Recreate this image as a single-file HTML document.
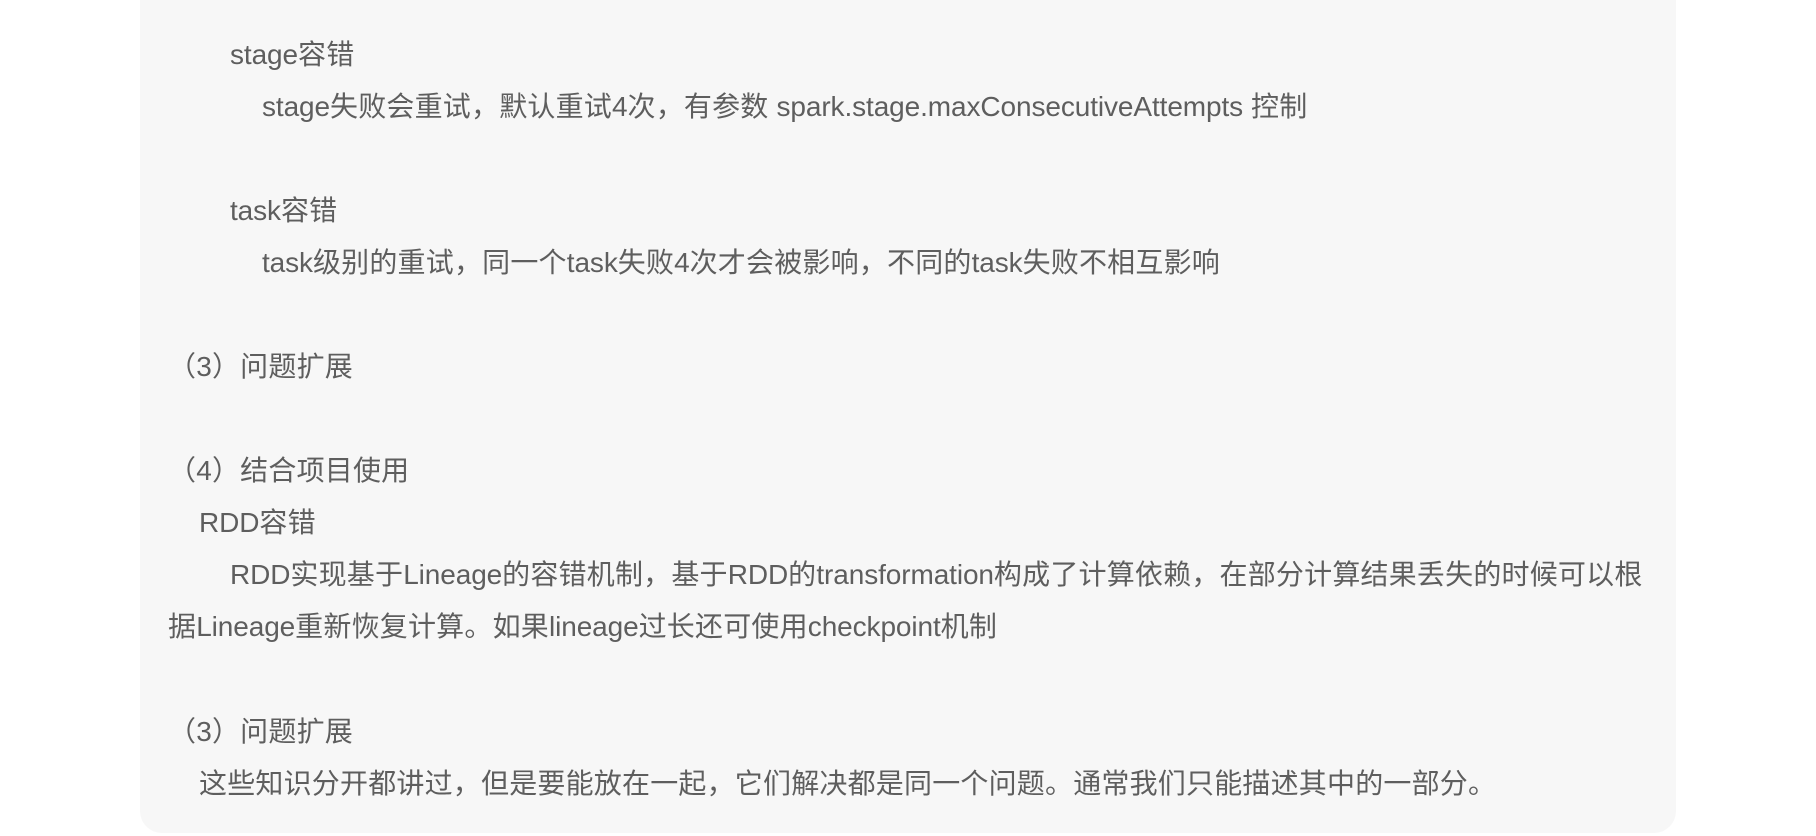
<!DOCTYPE html>
<html><head><meta charset="utf-8"><style>
html,body{margin:0;padding:0;background:#fff;width:1816px;height:836px;overflow:hidden}
.box{position:absolute;left:140px;top:-30px;width:1536px;height:863px;background:#f7f7f7;border-radius:22px}
.l{position:absolute;white-space:nowrap;font-family:"Liberation Sans","Noto Sans CJK SC",sans-serif;font-size:28px;line-height:52px;color:#5e5e5e;letter-spacing:0.2px}
i{font-style:normal;letter-spacing:-0.1px}
</style></head><body>
<div class="box"></div>
<div class="l" style="left:230px;top:29px"><i>stage</i>容错</div>
<div class="l" style="left:262px;top:81px"><i>stage</i>失败会重试，默认重试<i>4</i>次，有参数 <i>spark.stage.maxConsecutiveAttempts</i> 控制</div>
<div class="l" style="left:230px;top:185px"><i>task</i>容错</div>
<div class="l" style="left:262px;top:237px"><i>task</i>级别的重试，同一个<i>task</i>失败<i>4</i>次才会被影响，不同的<i>task</i>失败不相互影响</div>
<div class="l" style="left:168px;top:341px">（3）问题扩展</div>
<div class="l" style="left:168px;top:445px">（4）结合项目使用</div>
<div class="l" style="left:199px;top:497px"><i>RDD</i>容错</div>
<div class="l" style="left:230px;top:549px"><i>RDD</i>实现基于<i>Lineage</i>的容错机制，基于<i>RDD</i>的<i>transformation</i>构成了计算依赖，在部分计算结果丢失的时候可以根</div>
<div class="l" style="left:168px;top:601px">据<i>Lineage</i>重新恢复计算。如果<i>lineage</i>过长还可使用<i>checkpoint</i>机制</div>
<div class="l" style="left:168px;top:706px">（3）问题扩展</div>
<div class="l" style="left:199px;top:758px">这些知识分开都讲过，但是要能放在一起，它们解决都是同一个问题。通常我们只能描述其中的一部分。</div>
</body></html>
